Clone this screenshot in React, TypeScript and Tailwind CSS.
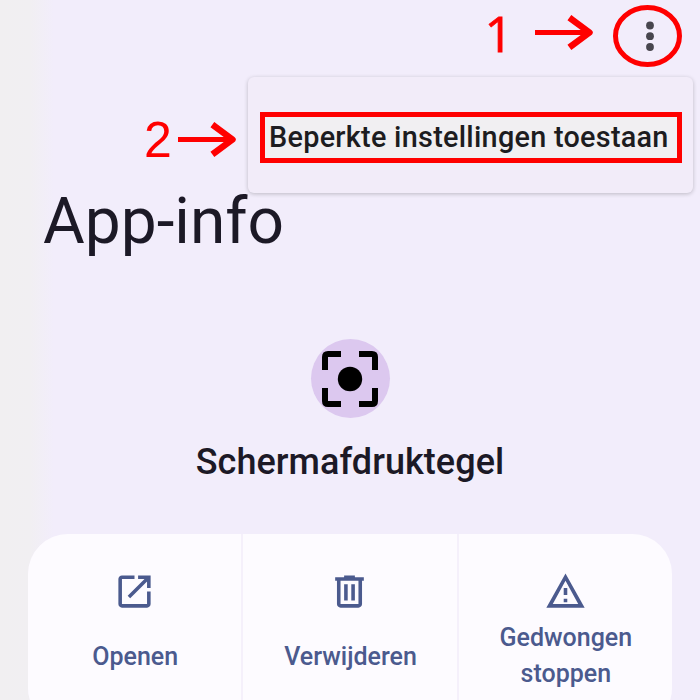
import type { ReactNode } from "react";

function Arrow() {
  return (
    <svg width="60" height="36" viewBox="0 0 60 36" fill="none" stroke="#ff0000" strokeWidth="5">
      <path d="M0 17.500H54" />
      <path d="M37 4.500L54.500 17.500L37 30.500" strokeWidth="6.500" strokeLinecap="square" strokeLinejoin="round" />
    </svg>
  );
}

function Action({ icon, children, low }: { icon: ReactNode; children: ReactNode; low?: boolean }) {
  return (
    <div className="flex h-full flex-1 flex-col items-center bg-[#fdfbff] pt-[36px] text-[#4b5a8e]">
      <div className="h-[44px]">{icon}</div>
      <div className={`${low ? "mt-[25px]" : "mt-[6px]"} pl-px text-center text-[25px] leading-[36px] font-medium`}>
        {children}
      </div>
    </div>
  );
}

export default function App() {
  return (
    <div className="relative flex h-[700px] w-[700px] flex-col overflow-hidden bg-[#f2edfb] bg-[linear-gradient(90deg,#f1eff1_0px,#f1eff2_30px,#f2edfb_54px)] font-['Roboto','Liberation_Sans',sans-serif]">
      <header className="flex h-[72px] shrink-0 justify-end pr-[18px] pt-[5px]">
        <span className="mr-[22px] h-[57px] font-['Open_Sans',sans-serif] text-[50px] leading-[56px] text-[#ff0000] [-webkit-text-stroke:0.8px_#ff0000]">1</span>
        <div className="mr-[18px] mt-[10px]"><Arrow /></div>
        <svg width="69" height="62" viewBox="0 0 69 62">
          <ellipse cx="34.500" cy="31" rx="32" ry="28.500" fill="none" stroke="#ff0000" strokeWidth="5" />
          <g fill="#48464e">
            <circle cx="37" cy="20.500" r="3.900" />
            <circle cx="37" cy="31.200" r="3.900" />
            <circle cx="37" cy="42" r="3.900" />
          </g>
        </svg>
      </header>

      <h1 className="mt-[112px] shrink-0 pl-[43px] text-[64px] leading-[75px] font-normal text-[#1c1926]">App-info</h1>

      <section className="mt-[80px] flex shrink-0 flex-col items-center">
        <div className="flex h-[79px] w-[79px] items-center justify-center rounded-full bg-[#dcc8ef]">
          <svg width="56" height="56" viewBox="0 0 56 56" fill="none" stroke="#000" strokeWidth="6">
            <path d="M3 19V6Q3 3 6 3H19M37 3H50Q53 3 53 6V19M53 37V50Q53 53 50 53H37M19 53H6Q3 53 3 50V37" />
            <circle cx="28" cy="28" r="12.200" fill="#000" stroke="none" />
          </svg>
        </div>
        <h2 className="mt-[22px] text-[36px] leading-[44px] font-medium tracking-[0.05px] text-[#1c1926]">Schermafdruktegel</h2>
      </section>

      <section className="mx-[28px] mt-[50px] flex h-[194px] shrink-0 gap-[2px] overflow-hidden rounded-[40px] bg-[#f5f0fb]">
        <Action
          low
          icon={
            <svg width="43" height="43" viewBox="0 0 24 24" fill="currentColor">
              <path d="M19 19H5V5h7V3H5C3.900 3 3 3.900 3 5v14c0 1.100.9 2 2 2h14c1.100 0 2-.9 2-2v-7h-2v7zM14 3v2h3.590l-9.400 9.400 1.410 1.410L19 6.410V10h2V3h-7z" />
            </svg>
          }
        >
          Openen
        </Action>
        <Action
          low
          icon={
            <svg width="43" height="43" viewBox="0 0 24 24" fill="currentColor">
              <path d="M15 4V3H9v1H4v2h1v13c0 1.100.9 2 2 2h10c1.100 0 2-.9 2-2V6h1V4h-5zm2 15H7V6h10v13zM9 8h2v9H9V8zm4 0h2v9h-2V8z" />
            </svg>
          }
        >
          Verwijderen
        </Action>
        <Action
          icon={
            <svg width="43" height="43" viewBox="0 0 24 24" fill="currentColor">
              <path d="M12 5.990L19.100 19H4.900L12 5.990M12 2L1.300 21h21.400L12 2zm1 14h-2v2h2v-2zm0-6h-2v4h2v-4z" />
            </svg>
          }
        >
          Gedwongen<br />stoppen
        </Action>
      </section>

      <div className="absolute left-[144px] top-[112px] flex">
        <span className="font-['Liberation_Sans',sans-serif] text-[50px] leading-[57px] text-[#ff0000]">2</span>
        <div className="ml-[6px] mt-[10px]"><Arrow /></div>
      </div>
      <div className="absolute left-[248px] top-[77px] flex h-[116px] w-[445px] items-center rounded-[6px] bg-[#f2ecf9] pl-[12px] pt-[5px] shadow-[0_1px_4px_#00000038]">
        <div className="flex h-[51px] w-[422px] items-center border-[5px] border-[#ff0000] bg-[#f1eff2] pt-px pl-[4px] text-[28.8px] font-medium tracking-[0.28px] whitespace-nowrap text-[#1d1c20]">
          Beperkte instellingen toestaan
        </div>
      </div>
    </div>
  );
}
